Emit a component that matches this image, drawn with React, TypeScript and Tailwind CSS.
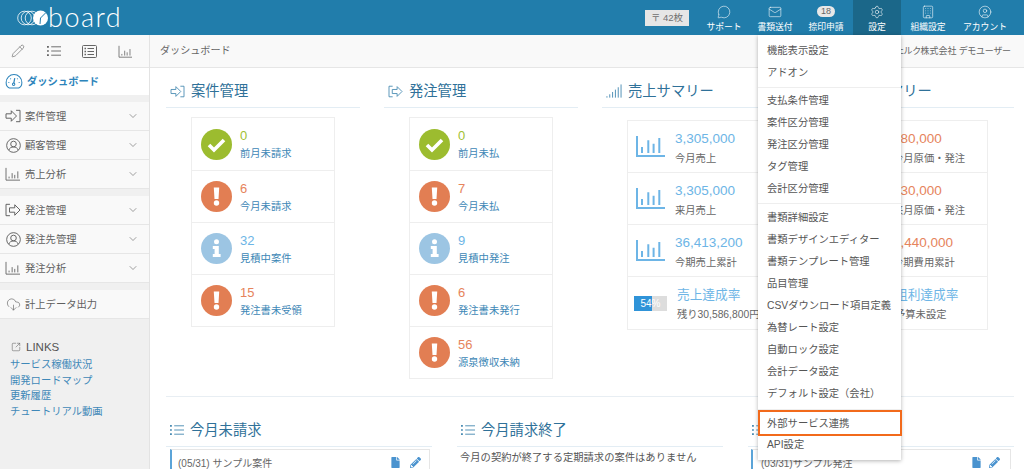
import React from "react";
import { ChevronDown, MessageCircle, Mail, Settings, Building, CircleUser, CloudDownload, SquareArrowOutUpRight, Pencil } from "lucide-react";
import { FaFile, FaPencilAlt } from "react-icons/fa";

const ArrowIn = ({ className = "" }: { className?: string }) => (
  <svg viewBox="0 0 18 16" className={className} fill="none" stroke="currentColor" strokeWidth="1.100">
    <path d="M1 5.500h6V2l6 6-6 6v-3.500H1z" strokeLinejoin="round" />
    <path d="M12.500 1.500H17v13h-4.500" />
  </svg>
);
const ArrowOut = ({ className = "" }: { className?: string }) => (
  <svg viewBox="0 0 18 16" className={className} fill="none" stroke="currentColor" strokeWidth="1.100">
    <path d="M5.500 1.500H1v13h4.500" />
    <path d="M5 5.500h6V2l6 6-6 6v-3.500H5z" strokeLinejoin="round" />
  </svg>
);
const Chart = ({ className = "", w = 1 }: { className?: string; w?: number }) => (
  <svg viewBox="0 0 18 16" className={className} fill="none" stroke="currentColor" strokeWidth={w}>
    <path d="M1 1v14h16" />
    <path d="M4.500 13v-2M8 13V7M11 13V9M14.500 13V5" />
  </svg>
);
const BigChart = () => (
  <svg viewBox="0 0 29 21" className="w-[29px] h-[21px] shrink-0 text-[#6db5e6]" fill="none" stroke="currentColor" strokeWidth="2">
    <path d="M1 0v20h28" />
    <path d="M6 17v-6M12.300 17V4.300M17.600 17V7.700M23.300 17V2" />
  </svg>
);
const User = ({ className = "" }: { className?: string }) => (
  <svg viewBox="0 0 16 16" className={className} fill="none" stroke="currentColor" strokeWidth="1">
    <circle cx="8" cy="8" r="7.300" />
    <circle cx="8" cy="6.400" r="3" />
    <path d="M3 13c.6-2.400 2.600-3.400 5-3.400s4.400 1 5 3.400" />
  </svg>
);
const Gauge = ({ className = "" }: { className?: string }) => (
  <svg viewBox="0 0 18 16" className={className} fill="none" stroke="currentColor" strokeWidth="1.100">
    <path d="M4 15h10c2-1 3.400-3.300 3.400-6A8.400 8.400 0 0 0 .6 9c0 2.700 1.400 5 3.400 6z" />
    <path d="M9.800 4.500 8.700 10" strokeWidth="1.300" />
    <circle cx="8.600" cy="11" r="1.300" />
    <path d="M3 9h1M14 9h1M5 4.800l.7.700M13 4.800l-.7.700" />
  </svg>
);
const ListIcon = ({ className = "" }: { className?: string }) => (
  <svg viewBox="0 0 15 12" className={className} fill="none" stroke="currentColor" strokeWidth="1">
    <path d="M4.500 1.500H15M4.500 6H15M4.500 10.500H15" />
    <path d="M0 1.500h2M0 6h2M0 10.500h2" strokeWidth="1.800" />
  </svg>
);
const FormIcon = ({ className = "" }: { className?: string }) => (
  <svg viewBox="0 0 15 13" className={className} fill="none" stroke="currentColor" strokeWidth="1">
    <rect x="0.500" y="0.500" width="14" height="12" rx="1" />
    <path d="M5.500 3.500H12M5.500 6.500H12M5.500 9.500H12" />
    <path d="M2.500 3.500h1.500M2.500 6.500h1.500M2.500 9.500h1.500" strokeWidth="1.300" />
  </svg>
);
const Signal = ({ className = "" }: { className?: string }) => (
  <svg viewBox="0 0 17 15" className={className} fill="none" stroke="currentColor" strokeWidth="1">
    <path d="M1 14v-1.500M4 14v-3.500M7 14V8M10 14V5.500M13 14V3M16 14V0" />
  </svg>
);

const Status = ({ kind }: { kind: "ok" | "warn" | "info" }) => {
  const fill = kind === "ok" ? "#9cbc2f" : kind === "warn" ? "#e27e53" : "#9cc5e3";
  return (
    <svg viewBox="0 0 31 31" className="w-[31px] h-[31px] shrink-0">
      <circle cx="15.500" cy="15.500" r="15.500" fill={fill} />
      {kind === "ok" && <path d="M8 16l5 5 10-10" fill="none" stroke="#fff" strokeWidth="3.600" />}
      {kind === "warn" && (
        <g fill="#fff">
          <path d="M12.800 6.500h5.400l-.7 11.500h-4z" />
          <circle cx="15.500" cy="22" r="2.700" />
        </g>
      )}
      {kind === "info" && (
        <g fill="#fff">
          <circle cx="15.500" cy="8.800" r="2.500" />
          <path d="M11.800 13h6v8h1.800v3h-7.800v-3h1.800v-5h-1.800z" />
        </g>
      )}
    </svg>
  );
};

type S = { kind: "ok" | "warn" | "info"; n: string; label: string };
const caseRows: S[] = [
  { kind: "ok", n: "0", label: "前月未請求" },
  { kind: "warn", n: "6", label: "今月未請求" },
  { kind: "info", n: "32", label: "見積中案件" },
  { kind: "warn", n: "15", label: "発注書未受領" },
];
const orderRows: S[] = [
  { kind: "ok", n: "0", label: "前月未払" },
  { kind: "warn", n: "7", label: "今月未払" },
  { kind: "info", n: "9", label: "見積中発注" },
  { kind: "warn", n: "6", label: "発注書未発行" },
  { kind: "warn", n: "56", label: "源泉徴収未納" },
];
const numColor = { ok: "text-[#9fc134]", warn: "text-[#e6845c]", info: "text-[#6db5e6]" };

const StatusCard = ({ rows }: { rows: S[] }) => (
  <div className="ml-[25px] mt-[9px] w-[144px] border border-[#eeeeee]">
    {rows.map((r, i) => (
      <div key={i} className={`flex items-center h-[52px] pl-[9px] gap-[8px] ${i ? "border-t border-[#eeeeee]" : ""}`}>
        <Status kind={r.kind} />
        <div className="flex flex-col">
          <span className={`text-[13px] leading-[18px] ${numColor[r.kind]}`}>{r.n}</span>
          <span className="text-[10.300px] leading-[14px] mt-[2px] text-[#3d87b6]">{r.label}</span>
        </div>
      </div>
    ))}
  </div>
);

const Title = ({ icon, text }: { icon: React.ReactNode; text?: string }) => (
  <div className="flex items-end h-[40px] pb-[6px] pl-[4px] gap-[6px] border-b border-[#e3edf4] text-[#2f7199] text-[14.300px] leading-[20px]">
    <span className="text-[#4a8cb3] flex items-center h-[20px]">{icon}</span>
    {text && <span className="whitespace-nowrap">{text}</span>}
  </div>
);

const SumCard = ({ color, rows, last }: { color: string; rows: [string, string][]; last: [string, string, boolean] }) => (
  <div className="ml-[25px] mt-[12px] w-[143px] border border-[#eeeeee]">
    {rows.map(([n, l], i) => (
      <div key={i} className="flex items-center h-[52px] pl-[8px] gap-[10px] border-b border-[#eeeeee]">
        <BigChart />
        <div className="flex flex-col whitespace-nowrap pt-[2px]">
          <span className={`text-[13.500px] leading-[18px] ${color}`}>{n}</span>
          <span className="text-[10.300px] leading-[14px] mt-[4px] text-[#666666]">{l}</span>
        </div>
      </div>
    ))}
    <div className="flex items-center h-[52px] pl-[6px] gap-[10px]">
      {last[2] ? (
        <div className="relative w-[33px] h-[15px] bg-[#dddddd] shrink-0 overflow-hidden">
          <div className="w-[18px] h-full bg-[#2f93d8]" />
          <span className="absolute inset-0 text-center text-[10px] leading-[15px] text-white">54%</span>
        </div>
      ) : (
        <div className="w-[33px] h-[15px] shrink-0" />
      )}
      <div className="flex flex-col whitespace-nowrap pt-[2px]">
        <span className="text-[12.700px] leading-[18px] text-[#6db5e6]">{last[0]}</span>
        <span className="text-[10.300px] leading-[14px] mt-[4px] text-[#666666]">{last[1]}</span>
      </div>
    </div>
  </div>
);

const NavItem = ({ icon, label, active, w = "w-[48px]" }: { icon: React.ReactNode; label: string; active?: boolean; w?: string }) => (
  <div className={`${w} h-[35px] flex flex-col items-center pt-[4px] ${active ? "bg-[#1b6789]" : ""}`}>
    <div className="h-[15px] flex items-center justify-center">{icon}</div>
    <span className="mt-[2px] text-[8.800px] leading-[13px] text-white whitespace-nowrap">{label}</span>
  </div>
);

const SideItem = ({ icon, label, chevron = true }: { icon: React.ReactNode; label: string; chevron?: boolean }) => (
  <div className="h-[29px] bg-[#f9f9f9] border-b border-[#e6e6e6] flex items-center pl-[5px] pr-[10px] text-[#5f5f5f]">
    <span className="w-[16px] h-[16px] flex items-center justify-center shrink-0">{icon}</span>
    <span className="ml-[4px] pt-[1px] text-[10.300px] leading-[14px] flex-1 whitespace-nowrap">{label}</span>
    {chevron && <ChevronDown size={12} strokeWidth={1.200} />}
  </div>
);

const MenuItem = ({ label }: { label: string }) => (
  <div className="h-[22px] pl-[9px] text-[10.300px] leading-[22px] text-[#555555] whitespace-nowrap">{label}</div>
);

export default function App() {
  const ic = "w-[16px] h-[14px]";
  return (
    <div
      className="relative w-[1024px] h-[469px] overflow-hidden flex flex-col bg-white"
      style={{ fontFamily: '"Liberation Sans", "Noto Sans CJK JP", sans-serif' }}
    >
      <header className="h-[35px] shrink-0 bg-[#217dab] flex items-center pr-[9px]">
        <div className="flex items-center pl-[17px] text-white">
          <svg viewBox="0 0 32 16" className="w-[32px] h-[16px]" fill="none" stroke="#fff" strokeWidth="0.800">
            <circle cx="7.500" cy="8" r="6.800" />
            <circle cx="11" cy="8" r="6.800" />
            <circle cx="15" cy="8" r="6.800" />
            <circle cx="23.500" cy="8" r="7.500" fill="#fff" stroke="none" />
            <path d="M23.500 8 L29 2.500" stroke="#217dab" strokeWidth="1" />
            <path d="M23.500 8 L23 14" stroke="#217dab" strokeWidth="1" />
          </svg>
          <span
            className="ml-[-1px] text-[27px] leading-[33px] mb-[2px] font-light tracking-[1.500px]"
            style={{ fontFamily: "Lato, sans-serif" }}
          >
            board
          </span>
        </div>
        <div className="ml-auto mr-[11px] w-[44px] h-[16px] bg-[#e6e6e6] text-[#6f6f6f] text-[9.500px] leading-[16px] text-center whitespace-nowrap">
          〒 42枚
        </div>
        <div className="flex gap-[3px]">
          <NavItem icon={<MessageCircle size={14} strokeWidth={1} color="#fff" />} label="サポート" />
          <NavItem icon={<Mail size={14} strokeWidth={1} color="#fff" />} label="書類送付" />
          <NavItem
            icon={<span className="w-[18px] h-[11px] rounded-full bg-[#e8e8e8] text-[#666666] text-[9px] leading-[11px] text-center">18</span>}
            label="捺印申請"
          />
          <NavItem active icon={<Settings size={14} strokeWidth={1} color="#fff" />} label="設定" />
          <NavItem icon={<Building size={14} strokeWidth={1} color="#fff" />} label="組織設定" />
          <NavItem w="w-[60px]" icon={<CircleUser size={14} strokeWidth={1} color="#fff" />} label="アカウント" />
        </div>
      </header>

      <div className="flex flex-1 min-h-0">
        <aside className="w-[150px] shrink-0 bg-[#f0f0f0] border-r border-[#e3e3e3] flex flex-col">
          <div className="h-[33px] bg-[#f9f9f9] border-b border-[#e6e6e6] flex items-center text-[#666666]">
            <span className="w-[36px] pl-[11px]"><Pencil size={14} strokeWidth={1.100} /></span>
            <span className="w-[36px] pl-[11px]"><ListIcon className="w-[14px] h-[12px]" /></span>
            <span className="w-[36px] pl-[10px]"><FormIcon className="w-[15px] h-[13px]" /></span>
            <span className="w-[36px] pl-[10px]"><Chart className="w-[15px] h-[13px]" w={1} /></span>
          </div>
          <div className="h-[27px] bg-white flex items-center pl-[5px] text-[#2d84bb]">
            <Gauge className="w-[18px] h-[15px]" />
            <span className="ml-[4px] text-[10.300px] font-bold leading-[14px]">ダッシュボード</span>
          </div>
          <div className="h-[7px]" />
          <SideItem icon={<ArrowIn className={ic} />} label="案件管理" />
          <SideItem icon={<User className="w-[15px] h-[15px]" />} label="顧客管理" />
          <SideItem icon={<Chart className={ic} w={1} />} label="売上分析" />
          <div className="h-[7px]" />
          <SideItem icon={<ArrowOut className={ic} />} label="発注管理" />
          <SideItem icon={<User className="w-[15px] h-[15px]" />} label="発注先管理" />
          <SideItem icon={<Chart className={ic} w={1} />} label="発注分析" />
          <div className="h-[7px]" />
          <SideItem chevron={false} icon={<CloudDownload size={15} strokeWidth={1} />} label="計上データ出力" />
          <div className="pt-[20px] pl-[10px]">
            <div className="flex items-center text-[#555555] text-[11.500px] leading-[16px] pl-[1px]">
              <SquareArrowOutUpRight size={10} strokeWidth={1.200} />
              <span className="ml-[5px]">LINKS</span>
            </div>
            <div className="text-[10.300px] leading-[15.700px] text-[#3f88b8] whitespace-nowrap mt-[2px]">
              <div>サービス稼働状況</div>
              <div>開発ロードマップ</div>
              <div>更新履歴</div>
              <div>チュートリアル動画</div>
            </div>
          </div>
        </aside>

        <main className="flex-1 min-w-0 flex flex-col">
          <div className="h-[33px] shrink-0 bg-[#f9f9f9] border-b border-[#e6e6e6] flex items-center justify-between pl-[10px] pr-[13px] text-[#666666]">
            <span className="text-[10.100px] leading-[14px]">ダッシュボード</span>
            <span className="text-[9px] leading-[14px] whitespace-nowrap [font-feature-settings:'palt']">株式会社ヴェルク株式会社 デモユーザー</span>
          </div>
          <div className="pl-[16px] pr-[10px] flex-1 min-h-0 overflow-hidden">
            <div className="h-[329px] border-b border-[#e8eef3] grid grid-cols-[194px_194px_194px_194px] gap-x-[24px] content-start">
              <section>
                <Title icon={<ArrowIn className="w-[15px] h-[13px]" />} text="案件管理" />
                <StatusCard rows={caseRows} />
              </section>
              <section>
                <Title icon={<ArrowOut className="w-[15px] h-[13px]" />} text="発注管理" />
                <StatusCard rows={orderRows} />
              </section>
              <section>
                <Title icon={<Signal className="w-[16px] h-[15px]" />} text="売上サマリー" />
                <SumCard
                  color="text-[#6db5e6]"
                  rows={[["3,305,000", "今月売上"], ["3,305,000", "来月売上"], ["36,413,200", "今期売上累計"]]}
                  last={["売上達成率", "残り30,586,800円", true]}
                />
              </section>
              <section>
                <Title icon={<Signal className="w-[16px] h-[15px]" />} text="費用サマリー" />
                <SumCard
                  color="text-[#e6845c]"
                  rows={[["580,000", "今月原価・発注"], ["130,000", "来月原価・発注"], ["2,440,000", "今期費用累計"]]}
                  last={["粗利達成率", "予算未設定", false]}
                />
              </section>
            </div>
            <div className="grid grid-cols-[266px_266px_266px] gap-x-[25px]">
              <section>
                <div className="h-[50px] flex items-end"><div className="w-full"><Title icon={<ListIcon className="w-[14px] h-[12px]" />} text="今月未請求" /></div></div>
                <div className="mt-[2px] ml-[4px] mr-[2px] h-[40px] border border-[#e6e6e6] border-l-2 border-l-[#5ba4d8] pl-[6px] pt-[7px] flex justify-between pr-[8px] text-[10px] leading-[14px] text-[#666666]">
                  <span className="whitespace-nowrap">(05/31) サンプル案件</span>
                  <span className="flex gap-[9px] text-[#4a93cf] text-[11px]"><FaFile /><FaPencilAlt /></span>
                </div>
              </section>
              <section>
                <div className="h-[50px] flex items-end"><div className="w-full"><Title icon={<ListIcon className="w-[14px] h-[12px]" />} text="今月請求終了" /></div></div>
                <div className="pt-[4px] pl-[3px] text-[10.300px] leading-[14px] text-[#555555] whitespace-nowrap">今月の契約が終了する定期請求の案件はありません</div>
              </section>
              <section>
                <div className="h-[50px] flex items-end"><div className="w-full"><Title icon={<ListIcon className="w-[14px] h-[12px]" />} /></div></div>
                <div className="mt-[2px] ml-[3px] mr-[3px] h-[40px] border border-[#e6e6e6] border-l-2 border-l-[#5ba4d8] pl-[8px] pt-[7px] flex justify-between pr-[10px] text-[10px] leading-[14px] text-[#666666]">
                  <span className="whitespace-nowrap">(03/31)サンプル発注</span>
                  <span className="flex gap-[7px] text-[#4a93cf] text-[11px]"><FaFile /><FaPencilAlt /></span>
                </div>
              </section>
            </div>
          </div>
        </main>
      </div>

      <div className="absolute left-[758px] top-[35px] w-[143px] h-[425px] bg-white pt-[5px] shadow-[0_1px_4px_rgba(0,0,0,0.3)]">
        <MenuItem label="機能表示設定" />
        <MenuItem label="アドオン" />
        <div className="h-px bg-[#eeeeee] mt-[3px] mb-[2px]" />
        <MenuItem label="支払条件管理" />
        <MenuItem label="案件区分管理" />
        <MenuItem label="発注区分管理" />
        <MenuItem label="タグ管理" />
        <MenuItem label="会計区分管理" />
        <div className="h-px bg-[#eeeeee] mt-[3px] mb-[3px]" />
        <MenuItem label="書類詳細設定" />
        <MenuItem label="書類デザインエディター" />
        <MenuItem label="書類テンプレート管理" />
        <MenuItem label="品目管理" />
        <MenuItem label="CSVダウンロード項目定義" />
        <MenuItem label="為替レート設定" />
        <MenuItem label="自動ロック設定" />
        <MenuItem label="会計データ設定" />
        <MenuItem label="デフォルト設定（会社）" />
        <div className="h-px bg-[#eeeeee] mt-[4px]" />
        <div className="h-[26px] mr-[-1px] mb-[-2px] border-2 border-[#f26a1b] pl-[7px] text-[10.300px] leading-[24px] text-[#555555] whitespace-nowrap">外部サービス連携</div>
        <MenuItem label="API設定" />
      </div>
    </div>
  );
}
